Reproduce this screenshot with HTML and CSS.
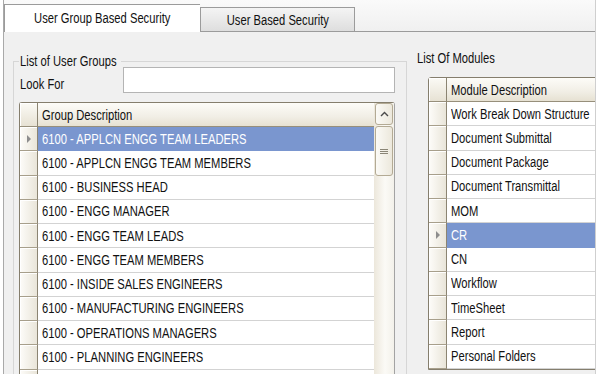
FILE: index.html
```html
<!DOCTYPE html>
<html>

<head>
    <meta charset="utf-8">
    <title>Security Settings</title>
    <link rel="stylesheet" href="styles.css">
</head>

<body>
    <div class="window">
        <div class="tabs">
            <div class="tab active"><span class="t">User Group Based Security</span></div>
            <div class="tab"><span class="t">User Based Security</span></div>
        </div>
        <div class="panel">
            <fieldset class="groups">
                <legend><span class="t">List of User Groups</span></legend>
                <div class="lookfor">
                    <label for="look"><span class="t">Look For</span></label>
                    <input type="text" id="look" class="search">
                </div>
                <div class="grid grid-left">
                    <div class="rows">
                        <div class="head"><span class="rh"></span><span class="cell"><span class="t">Group Description</span></span></div>
                        <div class="row sel"><span class="rh"><i class="arrow"></i></span><span class="cell"><span class="t">6100 - APPLCN ENGG TEAM LEADERS</span></span></div>
                        <div class="row"><span class="rh"></span><span class="cell"><span class="t">6100 - APPLCN ENGG TEAM MEMBERS</span></span></div>
                        <div class="row"><span class="rh"></span><span class="cell"><span class="t">6100 - BUSINESS HEAD</span></span></div>
                        <div class="row"><span class="rh"></span><span class="cell"><span class="t">6100 - ENGG MANAGER</span></span></div>
                        <div class="row"><span class="rh"></span><span class="cell"><span class="t">6100 - ENGG TEAM LEADS</span></span></div>
                        <div class="row"><span class="rh"></span><span class="cell"><span class="t">6100 - ENGG TEAM MEMBERS</span></span></div>
                        <div class="row"><span class="rh"></span><span class="cell"><span class="t">6100 - INSIDE SALES ENGINEERS</span></span></div>
                        <div class="row"><span class="rh"></span><span class="cell"><span class="t">6100 - MANUFACTURING ENGINEERS</span></span></div>
                        <div class="row"><span class="rh"></span><span class="cell"><span class="t">6100 - OPERATIONS MANAGERS</span></span></div>
                        <div class="row"><span class="rh"></span><span class="cell"><span class="t">6100 - PLANNING ENGINEERS</span></span></div>
                        <div class="row"><span class="rh"></span><span class="cell"></span></div>
                    </div>
                    <div class="vscroll">
                        <div class="up">
                            <svg width="9" height="6" viewBox="0 0 9 6"><polyline points="1,5 4.5,1.5 8,5" fill="none" stroke="#4a4a4a" stroke-width="1.4"/></svg>
                        </div>
                        <div class="thumb">
                            <svg width="8" height="7" viewBox="0 0 8 7"><path d="M0 1.5h8M0 3.5h8M0 5.5h8" stroke="#8a8576" stroke-width="1"/></svg>
                        </div>
                    </div>
                </div>
            </fieldset>

            <div class="modules">
                <div class="title"><span class="t">List Of Modules</span></div>
                <div class="grid grid-right">
                    <div class="rows">
                        <div class="head"><span class="rh"></span><span class="cell"><span class="t">Module Description</span></span></div>
                        <div class="row"><span class="rh"></span><span class="cell"><span class="t">Work Break Down Structure</span></span></div>
                        <div class="row"><span class="rh"></span><span class="cell"><span class="t">Document Submittal</span></span></div>
                        <div class="row"><span class="rh"></span><span class="cell"><span class="t">Document Package</span></span></div>
                        <div class="row"><span class="rh"></span><span class="cell"><span class="t">Document Transmittal</span></span></div>
                        <div class="row"><span class="rh"></span><span class="cell"><span class="t">MOM</span></span></div>
                        <div class="row sel"><span class="rh"><i class="arrow"></i></span><span class="cell"><span class="t">CR</span></span></div>
                        <div class="row"><span class="rh"></span><span class="cell"><span class="t">CN</span></span></div>
                        <div class="row"><span class="rh"></span><span class="cell"><span class="t">Workflow</span></span></div>
                        <div class="row"><span class="rh"></span><span class="cell"><span class="t">TimeSheet</span></span></div>
                        <div class="row"><span class="rh"></span><span class="cell"><span class="t">Report</span></span></div>
                        <div class="row"><span class="rh"></span><span class="cell"><span class="t">Personal Folders</span></span></div>
                    </div>
                </div>
            </div>
        </div>
    </div>
</body>

</html>
```

FILE: styles.css
```css
html,
body {
    margin: 0;
    background: #ffffff;
}

body {
    width: 600px;
    height: 374px;
    overflow: hidden;
    font-family: "Liberation Sans", Arial, sans-serif;
    font-size: 14px;
    color: #111111;
}

/* the original UI font is a narrow Tahoma, so squeeze the text a bit */
.t {
    display: inline-block;
    white-space: nowrap;
    transform: scaleX(0.8);
    transform-origin: 0 50%;
}

.window {
    margin-left: 3px;
    width: 591px;
    height: 374px;
    background: #f0f0f0;
    border-left: 1px solid #a9a9a9;
    border-right: 1px solid #cfcfcf;
    overflow: hidden;
}

/* tab strip */
.tabs {
    display: flex;
    align-items: flex-end;
    height: 32px;
    box-sizing: border-box;
    padding-top: 4px;
    border-bottom: 1px solid #9b9b9b;
    background: linear-gradient(#fafafa, #f0f0f0);
}

.tab {
    display: flex;
    align-items: center;
    justify-content: center;
    box-sizing: border-box;
    width: 155px;
    height: 24px;
    border: 1px solid #9b9b9b;
    border-bottom: none;
    background: linear-gradient(#f4f4f4, #dedede);
}

.tab .t {
    transform-origin: 50% 50%;
}

.tab.active {
    width: 196px;
    height: 28px;
    margin-bottom: -1px;
    padding-bottom: 2px;
    background: #ffffff;
    border-right: none;
}

/* content */
.panel {
    display: flex;
    align-items: flex-start;
}

.groups {
    box-sizing: border-box;
    width: 395px;
    height: 400px;
    margin: 22px 0 0 9px;
    padding: 0 11px 0 5px;
    border: 1px solid #d6d6d6;
}

.groups legend {
    width: 100px;
    padding: 0 1px;
    line-height: 14px;
    white-space: nowrap;
}

.lookfor {
    display: flex;
    align-items: center;
    height: 26px;
    margin-top: -1px;
}

.lookfor label {
    width: 103px;
    padding-left: 1px;
    margin-top: 8px;
}

.search {
    box-sizing: border-box;
    width: 272px;
    height: 26px;
    margin: 0;
    border: 1px solid #b4b4b4;
    background: #ffffff;
}

.grid {
    display: flex;
    border: 1px solid #857e6d;
    border-radius: 3px 3px 0 0;
    background: #ffffff;
}

.grid-left {
    margin-top: 9px;
    border-right-color: #a3a3a3;
}

.rows {
    flex: 1;
    min-width: 0;
}

.head,
.row {
    display: flex;
}

.head {
    height: 24px;
}

.row {
    height: 24.25px;
}

.rh {
    display: flex;
    align-items: center;
    justify-content: center;
    box-sizing: border-box;
    width: 18px;
    flex-shrink: 0;
    background: linear-gradient(90deg, #fdfcf9, #e9e5d9);
    border-right: 1px solid #8b8472;
    border-bottom: 1px solid #a79f8b;
    box-shadow: inset 1px 1px 0 #ffffff;
}

.cell {
    display: flex;
    align-items: center;
    flex: 1;
    min-width: 0;
    box-sizing: border-box;
    padding-left: 4px;
    overflow: hidden;
    border-bottom: 1px solid #d3d3d3;
}

.head .rh {
    background: linear-gradient(#fbfaf5, #e7e2d4);
    border-bottom-color: #978f7b;
}

.head .cell {
    background: linear-gradient(#fdfcf8, #f1eee5 60%, #e6e1d2);
    border-bottom: 1px solid #978f7b;
    border-radius: 0 3px 0 0;
}

.row.sel .cell {
    background: #7a96cf;
    color: #ffffff;
    border-bottom-color: #7a96cf;
}

.arrow {
    width: 0;
    height: 0;
    border-left: 4px solid #8d8d8d;
    border-top: 4px solid transparent;
    border-bottom: 4px solid transparent;
}

/* scrollbar */
.vscroll {
    width: 20px;
    flex-shrink: 0;
    box-sizing: border-box;
    padding: 0 1px;
    background: linear-gradient(90deg, #ece7db, #fbfaf6 55%, #f3f1ea);
}

.up,
.thumb {
    display: flex;
    align-items: center;
    justify-content: center;
    box-sizing: border-box;
    border: 1px solid #b3aa94;
    border-radius: 3px;
    background: linear-gradient(90deg, #fbfaf6, #ece8dc);
}

.up {
    height: 22px;
}

.thumb {
    height: 50px;
    margin-top: 1px;
}

/* modules */
.modules {
    margin-top: 18px;
}

.title {
    margin-left: 10px;
    line-height: 16px;
}

.grid-right {
    width: 200px;
    margin: 11px 0 0 21px;
}
```
